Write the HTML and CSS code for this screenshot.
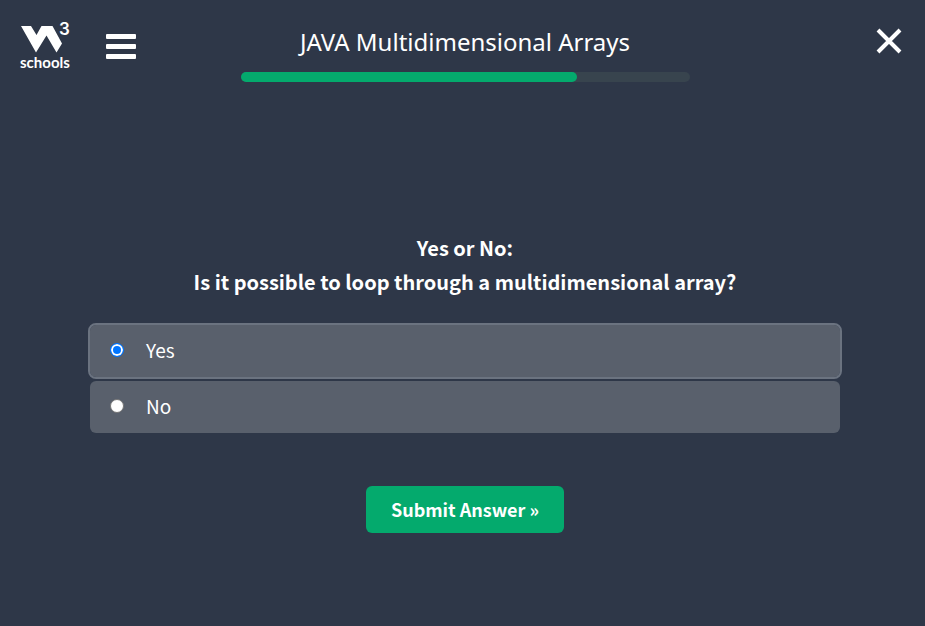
FILE: index.html
```html
<!DOCTYPE html>
<html lang="en">
<head>
<meta charset="utf-8">
<meta name="viewport" content="width=device-width, initial-scale=1">
<title>JAVA Multidimensional Arrays</title>
<link rel="stylesheet" href="styles.css">
</head>
<body>
<header class="topbar">
  <div class="topbar-left">
    <a class="logo" href="#" aria-label="W3Schools home">
      <span class="logo-mark">
        <svg class="logo-w" viewBox="0 0 42 27" aria-hidden="true">
          <path d="M0 0H10L15.500 9L20.500 0H31.500L41 17.500L35.500 26.500L25.500 9.500L15 26.500Z"/>
        </svg>
        <span class="logo-three">3</span>
      </span>
      <span class="logo-name">schools</span>
    </a>
    <button class="icon-button" type="button" aria-label="Menu">
      <svg class="menu-icon" viewBox="0 0 30 25" aria-hidden="true">
        <rect width="30" height="5" rx="1"/>
        <rect y="10" width="30" height="5" rx="1"/>
        <rect y="20" width="30" height="5" rx="1"/>
      </svg>
    </button>
  </div>
  <div class="heading">
    <h1 class="title">JAVA Multidimensional Arrays</h1>
    <div class="progress"><div class="progress-fill" style="width: 75%"></div></div>
  </div>
  <button class="icon-button close" type="button" aria-label="Close">
    <svg class="close-icon" viewBox="0 0 26 26" aria-hidden="true">
      <path d="M2 2L24 24M24 2L2 24"/>
    </svg>
  </button>
</header>
<main class="quiz">
  <form class="quiz-form">
    <h2 class="question" id="question">Yes or No:<br>Is it possible to loop through a multidimensional array?</h2>
    <div class="options" role="radiogroup" aria-labelledby="question">
      <label class="option" for="yes"><input type="radio" id="yes" name="answer" checked><span>Yes</span></label>
      <label class="option" for="no"><input type="radio" id="no" name="answer"><span>No</span></label>
    </div>
    <button class="submit" type="button">Submit Answer »</button>
  </form>
</main>
</body>
</html>
```
FILE: styles.css
```css
* {
  box-sizing: border-box;
}

body {
  margin: 0;
  min-height: 100vh;
  background: #2e3748;
  color: #fff;
  font-family: "Noto Sans CJK SC", "Noto Sans", sans-serif;
}

.topbar {
  display: grid;
  grid-template-columns: 1fr 449px 1fr;
  align-items: start;
  padding: 20px 17px 0 20px;
}

.topbar-left {
  display: flex;
  align-items: start;
  gap: 36px;
}

.logo {
  display: flex;
  flex-direction: column;
  color: #fff;
  text-decoration: none;
  font-family: Lato, sans-serif;
  font-weight: 700;
}

.logo-mark {
  display: flex;
  align-items: start;
  height: 34px;
}

.logo-w {
  width: 42px;
  height: 27px;
  margin: 6px 0 0 1px;
  flex: none;
  fill: #fff;
}

.logo-three {
  width: 7px;
  margin-left: -4px;
  font-family: Inter, sans-serif;
  font-size: 17px;
  font-weight: 600;
  line-height: 18px;
}

.logo-name {
  font-size: 15px;
  line-height: 16px;
}

.icon-button {
  display: block;
  padding: 0;
  border: 0;
  background: none;
  cursor: pointer;
}

.menu-icon {
  display: block;
  width: 30px;
  height: 25px;
  margin-top: 14px;
  fill: #fff;
}

.heading {
  margin: 0 -1px 0 1px;
}

.title {
  margin: 0;
  font-family: "Noto Sans", sans-serif;
  font-size: 24px;
  font-weight: 400;
  line-height: 44px;
  text-align: center;
}

.progress {
  height: 10px;
  margin-top: 8px;
  border-radius: 5px;
  background: #38444e;
}

.progress-fill {
  height: 10px;
  border-radius: 5px;
  background: #04aa6d;
}

.close {
  justify-self: end;
  margin: 8px 6px 0 0;
}

.close-icon {
  display: block;
  width: 26px;
  height: 26px;
  fill: none;
  stroke: #fff;
  stroke-width: 4;
}

.quiz {
  padding: 149px 85px 40px 90px;
}

.quiz-form {
  display: flex;
  flex-direction: column;
  align-items: center;
}

.question {
  margin: 0;
  font-size: 20px;
  font-weight: 700;
  line-height: 34px;
  text-align: center;
}

.options {
  display: flex;
  flex-direction: column;
  align-self: stretch;
  gap: 4px;
  margin-top: 26px;
}

.option {
  display: flex;
  align-items: center;
  height: 52px;
  padding: 0 20px 2px;
  gap: 22px;
  border-radius: 6px;
  background: #59606c;
  font-size: 19px;
  line-height: 28px;
  cursor: pointer;
}

.option:has(input:checked) {
  outline: 2px solid #6b7380;
}

.option input {
  appearance: none;
  width: 14px;
  height: 14px;
  margin: 0;
  border: 1px solid #767676;
  border-radius: 50%;
  background: #fff;
}

.option input:checked {
  border-color: #0075ff;
  background: #0075ff;
  box-shadow: inset 0 0 0 2px #fff;
}

.submit {
  height: 47px;
  margin-top: 53px;
  padding: 0 25px 2px;
  border: 0;
  border-radius: 6px;
  background: #04aa6d;
  color: #fff;
  font-family: inherit;
  font-size: 18px;
  font-weight: 700;
  cursor: pointer;
}
```
